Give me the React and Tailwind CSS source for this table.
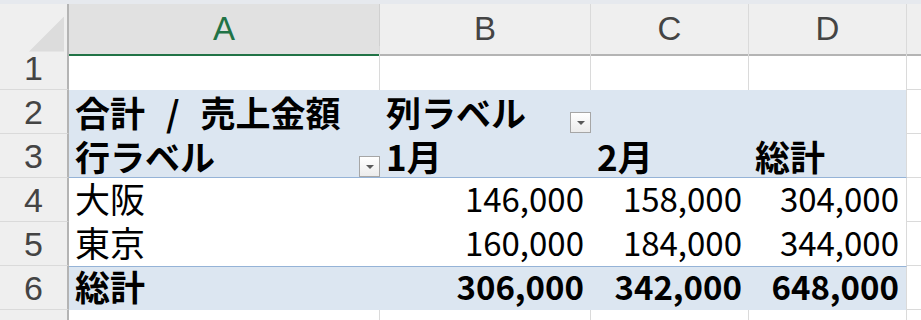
import React from "react";

const cols = "grid grid-cols-[69px_311px_211px_158px_158px_1fr] grid-rows-[44px] h-[44px]";
const cellFont = "font-['Noto_Sans_CJK_JP','Noto_Sans',sans-serif] leading-none text-black";

function Dropdown() {
  return (
    <div className="w-[21px] h-[21px] shrink-0 border border-[#a6a6a6] bg-gradient-to-b from-white to-[#ececec] flex items-center justify-center">
      <div className="w-0 h-0 border-l-[4px] border-r-[4px] border-t-[4px] border-l-transparent border-r-transparent border-t-[#5a5a5a]" />
    </div>
  );
}

function RowHead({ n }) {
  return (
    <div className="bg-[#efefef] border-r-2 border-r-[#b4b4b4] border-b border-b-[#dadada] flex items-center justify-center font-['Liberation_Sans',sans-serif] text-[34px] leading-none text-[#444]">
      {n}
    </div>
  );
}

function Cell({ children, className = "", right = false }) {
  return (
    <div
      className={`min-h-0 flex items-end pb-[7px] ${right ? "justify-end pr-[7px] text-[33px]" : "pl-[6px] text-[35px]"} ${cellFont} ${className}`}
    >
      {children}
    </div>
  );
}

export default function App() {
  return (
    <div className="w-[921px] h-[320px] overflow-hidden bg-white">
      {/* ribbon edge */}
      <div className="h-[4px] bg-[#e6e9ee]" />

      {/* column headers */}
      <div className="grid grid-cols-[69px_311px_211px_158px_158px_1fr] h-[42px] font-['Liberation_Sans',sans-serif] text-[33px]">
        <div className="bg-[#efefef] border-r-2 border-r-[#b4b4b4] border-b-2 border-b-[#b4b4b4] flex items-end justify-end pr-[3px] pb-[2px]">
          <div className="w-[35px] h-[35px] bg-[#dcdcdc] [clip-path:polygon(100%_0,100%_100%,0_100%)]" />
        </div>
        <div className="bg-[#e1e1e1] border-r border-r-[#d0d0d0] border-b-2 border-b-[#217346] flex items-center justify-center text-[#217346]">
          A
        </div>
        <div className="bg-[#efefef] border-r border-r-[#dadada] border-b-2 border-b-[#b4b4b4] flex items-center justify-center text-[#444]">
          B
        </div>
        <div className="bg-[#efefef] border-r border-r-[#dadada] border-b-2 border-b-[#b4b4b4] flex items-center justify-center text-[#444]">
          C
        </div>
        <div className="bg-[#efefef] border-r border-r-[#dadada] border-b-2 border-b-[#b4b4b4] flex items-center justify-center text-[#444]">
          D
        </div>
        <div className="bg-[#efefef] border-b-2 border-b-[#b4b4b4]" />
      </div>

      {/* row 1 */}
      <div className={cols}>
        <RowHead n="1" />
        <div className="border-r border-[#dadada]" />
        <div className="border-r border-[#dadada]" />
        <div className="border-r border-[#dadada]" />
        <div className="border-r border-[#dadada]" />
        <div className="border-b border-[#dadada]" />
      </div>

      {/* row 2: value field and column label */}
      <div className={cols}>
        <RowHead n="2" />
        <Cell className="bg-[#dce6f1] font-bold whitespace-pre [word-spacing:13px] !pb-[5px]">合計 / 売上金額</Cell>
        <Cell className="bg-[#dce6f1] font-bold justify-between !pb-[1px]">
          <span className="pb-[4px]">列ラベル</span>
          <Dropdown />
        </Cell>
        <div className="bg-[#dce6f1]" />
        <div className="bg-[#dce6f1] border-r border-[#dadada]" />
        <div className="border-b border-[#dadada]" />
      </div>

      {/* row 3: row label and months */}
      <div className={cols}>
        <RowHead n="3" />
        <Cell className="bg-[#dce6f1] font-bold justify-between border-b border-[#95b3d7] !pb-0">
          <span className="pb-[4px]">行ラベル</span>
          <Dropdown />
        </Cell>
        <Cell className="bg-[#dce6f1] font-bold border-b border-[#95b3d7] !pb-[4px]">1月</Cell>
        <Cell className="bg-[#dce6f1] font-bold border-b border-[#95b3d7] !pb-[4px]">2月</Cell>
        <Cell className="bg-[#dce6f1] font-bold border-b border-[#95b3d7] border-r border-r-[#dadada] !pb-[4px]">総計</Cell>
        <div className="border-b border-[#dadada]" />
      </div>

      {/* rows 4-5: regions */}
      {[
        ["4", "大阪", "146,000", "158,000", "304,000"],
        ["5", "東京", "160,000", "184,000", "344,000"],
      ].map(([n, name, b, c, d]) => (
        <div key={n} className={cols}>
          <RowHead n={n} />
          <Cell>{name}</Cell>
          <Cell right>{b}</Cell>
          <Cell right>{c}</Cell>
          <Cell right className="border-r border-[#dadada]">{d}</Cell>
          <div className="border-b border-[#dadada]" />
        </div>
      ))}

      {/* row 6: grand total */}
      <div className={cols}>
        <RowHead n="6" />
        <Cell className="bg-[#dce6f1] font-bold border-t border-[#95b3d7]">総計</Cell>
        <Cell right className="bg-[#dce6f1] font-bold border-t border-[#95b3d7]">306,000</Cell>
        <Cell right className="bg-[#dce6f1] font-bold border-t border-[#95b3d7]">342,000</Cell>
        <Cell right className="bg-[#dce6f1] font-bold border-t border-[#95b3d7] border-r border-r-[#dadada]">648,000</Cell>
        <div className="border-b border-[#dadada]" />
      </div>

      {/* row 7, only its top edge is in view */}
      <div className={cols}>
        <RowHead n="" />
        <div className="border-r border-[#dadada]" />
        <div className="border-r border-[#dadada]" />
        <div className="border-r border-[#dadada]" />
        <div className="border-r border-[#dadada]" />
        <div />
      </div>
    </div>
  );
}
